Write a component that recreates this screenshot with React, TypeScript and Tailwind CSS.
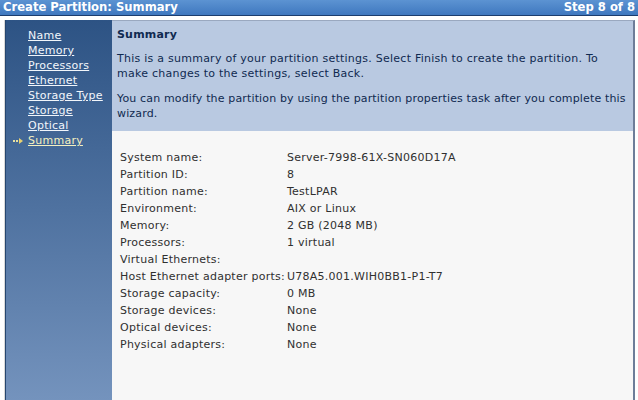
const navItems = ['Name', 'Memory', 'Processors', 'Ethernet', 'Storage Type', 'Storage', 'Optical']

const rows: [string, string][] = [
  ['System name:', 'Server-7998-61X-SN060D17A'],
  ['Partition ID:', '8'],
  ['Partition name:', 'TestLPAR'],
  ['Environment:', 'AIX or Linux'],
  ['Memory:', '2 GB (2048 MB)'],
  ['Processors:', '1 virtual'],
  ['Virtual Ethernets:', ''],
  ['Host Ethernet adapter ports:', 'U78A5.001.WIH0BB1-P1-T7'],
  ['Storage capacity:', '0 MB'],
  ['Storage devices:', 'None'],
  ['Optical devices:', 'None'],
  ['Physical adapters:', 'None'],
]

export default function App() {
  return (
    <div className="h-[400px] w-[638px] overflow-hidden bg-white font-['DejaVu_Sans',Verdana,sans-serif] text-[11px] tracking-[0.25px]">
      {/* title bar */}
      <div className="flex h-[16px] items-center justify-between border-b border-[#1c3d6e] bg-gradient-to-b from-[#5c93d2] to-[#3f78bf] pl-[3px] pr-[3px] text-[11.6px] font-bold leading-none tracking-normal text-white">
        <span>Create Partition: Summary</span>
        <span>Step 8 of 8</span>
      </div>

      <div className="mt-[4px] flex h-[380px] pl-[4px] pr-[3px]">
        <div className="w-px shrink-0 bg-[#d8d8d8]" />
        {/* left nav */}
        <div className="w-[107px] shrink-0 border-l border-[#26466f] bg-gradient-to-b from-[#2d5384] via-[#4f72a0] to-[#7493bd] pl-[22px] pt-[8px]">
          {navItems.map((item) => (
            <div key={item} className="h-[15px] whitespace-nowrap leading-[15px]">
              <a className="text-[#f2f6fb] underline">{item}</a>
            </div>
          ))}
          <div className="relative h-[15px] leading-[15px]">
            <span className="absolute left-[-15px] top-[5px] flex items-center gap-[1px]">
              <span className="h-[2px] w-[2px] bg-[#e8e0a0]" />
              <span className="h-[2px] w-[2px] bg-[#e8e0a0]" />
              <span className="h-0 w-0 border-y-[3px] border-l-[4px] border-y-transparent border-l-[#e8d070]" />
            </span>
            <a className="text-[#f4f0c0] underline">Summary</a>
          </div>
        </div>

        {/* main */}
        <div className="flex min-w-0 flex-1 flex-col border-r-2 border-t border-[#6d7d99] border-t-[#9aa8bf]">
          <div className="h-[110px] overflow-hidden whitespace-nowrap bg-[#b9c9e1] pl-[5px] pt-[5px] text-[#102a50]">
            <div className="text-[11px] font-bold leading-[18px] tracking-[0.2px]">Summary</div>
            <p className="mt-[7px] leading-[15px]">
              This is a summary of your partition settings. Select Finish to create the partition. To
              <br />
              make changes to the settings, select Back.
            </p>
            <p className="mt-[10px] leading-[15px] tracking-[0.15px]">
              You can modify the partition by using the partition properties task after you complete this
              <br />
              wizard.
            </p>
          </div>
          <div className="flex-1 bg-[#f7f7f7] pl-[8px] pt-[18px] text-[#303030]">
            {rows.map(([k, v]) => (
              <div key={k} className="flex h-[17px] leading-[17px]">
                <span className="w-[167px] shrink-0 whitespace-nowrap">{k}</span>
                <span className="whitespace-nowrap">{v}</span>
              </div>
            ))}
          </div>
        </div>
      </div>
    </div>
  )
}
